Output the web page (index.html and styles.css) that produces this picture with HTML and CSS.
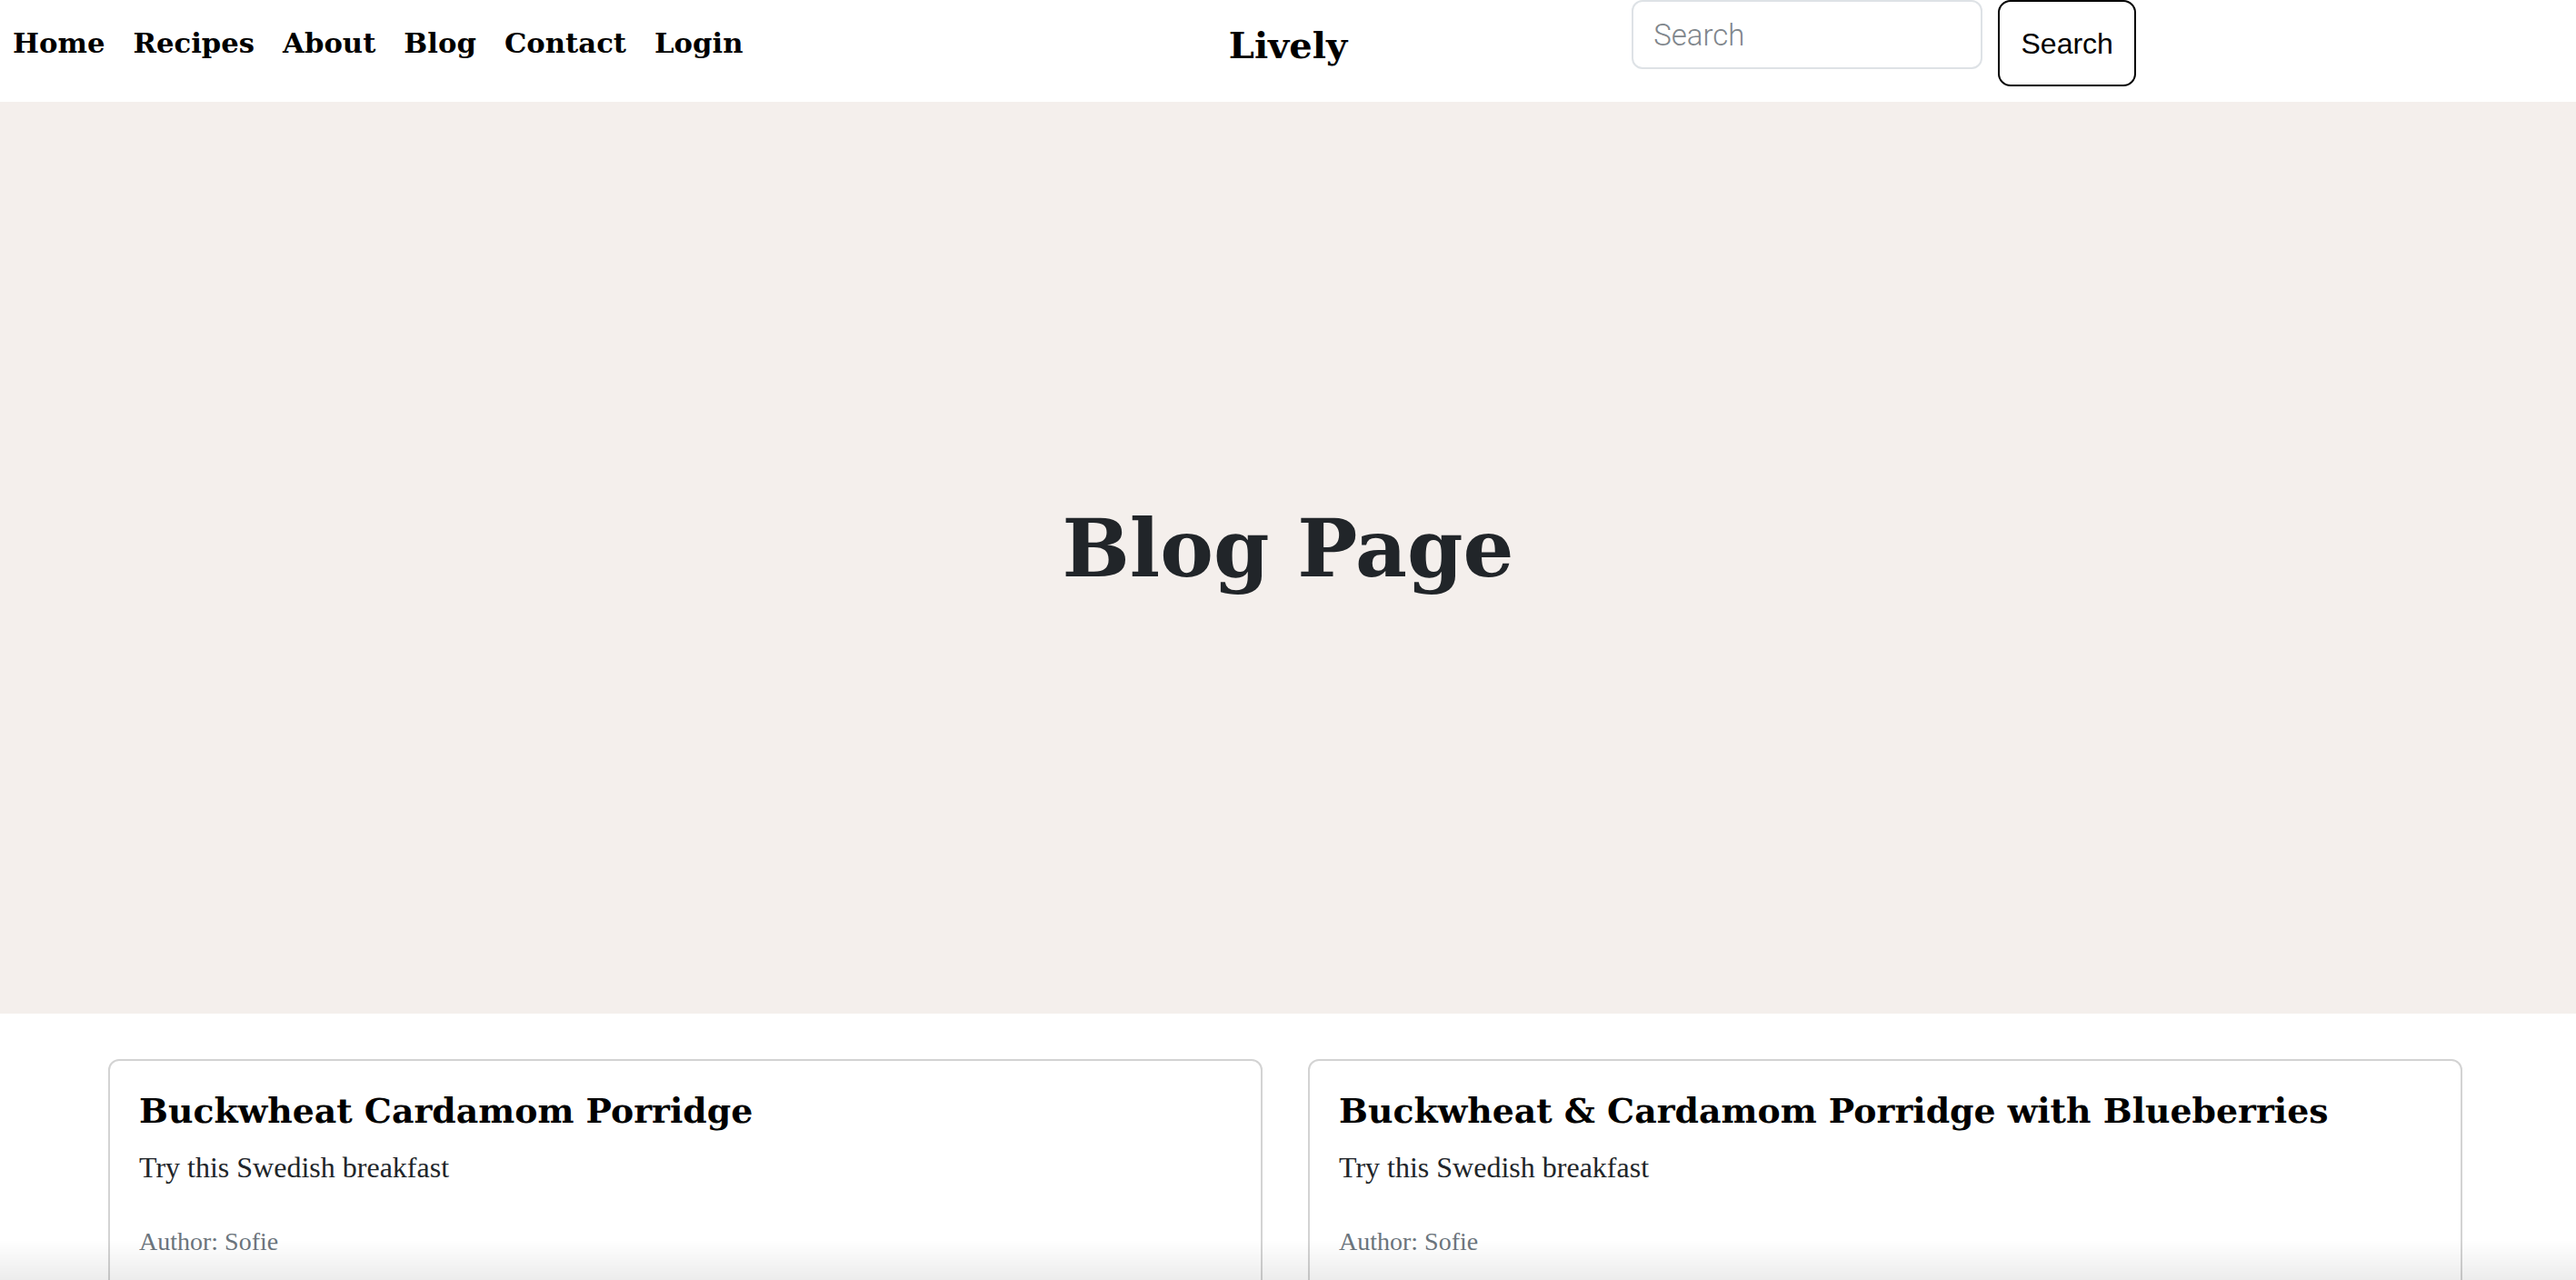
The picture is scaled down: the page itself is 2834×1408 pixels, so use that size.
FILE: index.html
```html
<!DOCTYPE html>
<html lang="en">
<head>
<meta charset="utf-8">
<title>Lively – Blog</title>
<link rel="stylesheet" href="styles.css">
</head>
<body>
<header class="navbar">
  <ul class="nav-links">
    <li><a class="nav-link" href="#">Home</a></li>
    <li><a class="nav-link" href="#">Recipes</a></li>
    <li><a class="nav-link" href="#">About</a></li>
    <li><a class="nav-link" href="#">Blog</a></li>
    <li><a class="nav-link" href="#">Contact</a></li>
    <li><a class="nav-link" href="#">Login</a></li>
  </ul>
  <a class="brand" href="#">Lively</a>
  <form class="search" onsubmit="return false">
    <input class="search-input" type="search" placeholder="Search">
    <button class="search-btn" type="submit">Search</button>
  </form>
</header>

<section class="hero">
  <h1 class="hero-title">Blog Page</h1>
</section>

<main class="posts">
  <article class="card">
    <div class="card-body">
      <h5 class="card-title">Buckwheat Cardamom Porridge</h5>
      <p class="card-text">Try this Swedish breakfast</p>
      <p class="card-author">Author: Sofie</p>
    </div>
  </article>
  <article class="card">
    <div class="card-body">
      <h5 class="card-title">Buckwheat &amp; Cardamom Porridge with Blueberries</h5>
      <p class="card-text">Try this Swedish breakfast</p>
      <p class="card-author">Author: Sofie</p>
    </div>
  </article>
</main>

<div class="bottom-fade"></div>
</body>
</html>
```

FILE: styles.css
```css
* {
  box-sizing: border-box;
}

html, body {
  margin: 0;
  padding: 0;
}

body {
  font-family: "Liberation Serif", "Times New Roman", serif;
  font-size: 32px;
  line-height: 1.5;
  color: #212529;
  background: #ffffff;
  overflow: hidden;
}

/* ---------- Navbar ---------- */
.navbar {
  height: 112px;
  display: grid;
  grid-template-columns: 1fr auto 1fr;
  align-items: start;
  background: #ffffff;
}

.nav-links {
  list-style: none;
  margin: 0;
  padding: 29px 0 0 0;
  display: flex;
}

.nav-link {
  display: block;
  padding: 0 16px 0 14px;
  font-family: "DejaVu Serif", "Liberation Serif", serif;
  font-weight: 700;
  font-size: 30.7px;
  line-height: normal;
  color: #000000;
  text-decoration: none;
}

.nav-links li + li .nav-link {
  padding-left: 15px;
}

.brand {
  display: block;
  margin-top: 26px;
  font-family: "DejaVu Serif", "Liberation Serif", serif;
  font-weight: 700;
  font-size: 40px;
  line-height: normal;
  color: #000000;
  text-decoration: none;
}

.search {
  display: flex;
  align-items: flex-start;
  gap: 17px;
  margin: 0 0 0 313px;
}

.search-input {
  width: 386px;
  height: 76px;
  padding: 12px 22px;
  border: 2px solid #dee2e6;
  border-radius: 12px;
  font-family: "Roboto", "Liberation Sans", sans-serif;
  font-weight: 300;
  font-size: 33px;
  line-height: 48px;
  color: #212529;
  background: #ffffff;
  outline: none;
}

.search-input::placeholder {
  color: #80868c;
}

.search-btn {
  width: 152px;
  height: 95px;
  padding: 2px 0 0 0;
  border: 2px solid #000000;
  border-radius: 14px;
  background: #ffffff;
  font-family: "Liberation Sans", Arial, sans-serif;
  font-size: 32px;
  color: #000000;
  cursor: pointer;
}

/* ---------- Hero ---------- */
.hero {
  height: 1003px;
  background: #f4efec;
  display: flex;
  align-items: center;
  justify-content: center;
}

.hero-title {
  margin: 0 0 20px 0;
  font-family: "DejaVu Serif", "Liberation Serif", serif;
  font-weight: 700;
  font-size: 88px;
  line-height: 1.2;
  color: #212529;
}

/* ---------- Posts ---------- */
.posts {
  width: 2590px;
  margin: 50px 0 0 119px;
  display: grid;
  grid-template-columns: 1fr 1fr;
  gap: 50px;
}

.card {
  border: 2px solid #d3d3d3;
  border-radius: 12px;
  background: #ffffff;
}

.card-body {
  padding: 32px;
}

.card-title {
  margin: 0 0 14px 0;
  font-family: "DejaVu Serif", "Liberation Serif", serif;
  font-weight: 700;
  font-size: 37.8px;
  line-height: 1.24;
  color: #000000;
}

.card-text {
  margin: 0 0 37px 0;
  font-size: 32px;
  line-height: 48px;
  color: #212529;
}

.card-author {
  margin: 0;
  font-size: 28px;
  line-height: 42px;
  color: #6c757d;
}

/* ---------- Bottom fade ---------- */
.bottom-fade {
  position: fixed;
  left: 0;
  right: 0;
  bottom: 0;
  height: 44px;
  background: linear-gradient(to bottom, rgba(0, 0, 0, 0), rgba(0, 0, 0, 0.075));
  pointer-events: none;
}
```
